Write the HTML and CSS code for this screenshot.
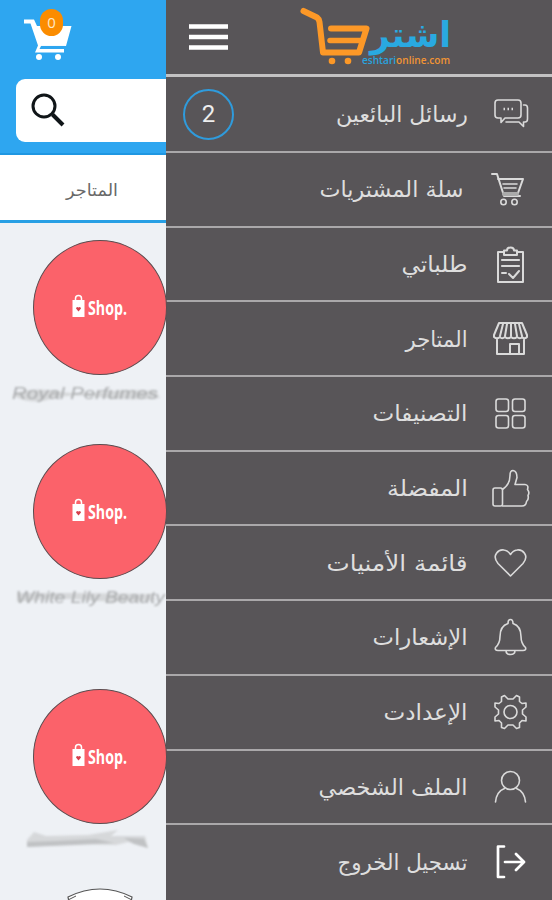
FILE: index.html
```html
<!DOCTYPE html>
<html lang="ar">
<head>
<meta charset="utf-8">
<title>اشتر</title>
<link rel="stylesheet" href="styles.css">
</head>
<body>
<div class="app">
  <main class="page">
    <header class="top">
      <svg class="basket" viewBox="0 0 54 58" width="54" height="58">
        <path d="M3 19.500h10l3 6.500h34.500L45 46H20l-1.500 3H43v3.500H14l3-7L9.500 23.500H3z" fill="#fff"/>
        <path d="M20 46.700h24" stroke="#2ea6f0" stroke-width="1.500"/>
        <circle cx="18" cy="57" r="3" fill="#fff"/><circle cx="37" cy="57" r="3" fill="#fff"/>
        <rect x="19" y="9" width="23" height="27" rx="11.500" fill="#fb8c00"/>
        <text x="30.500" y="28" class="count">0</text>
      </svg>
      <div class="search">
        <svg viewBox="0 0 36 36" width="36" height="36" fill="none" stroke="#101518">
          <circle cx="14" cy="14" r="11" stroke-width="3"/><path d="M22.500 22.500 33 33" stroke-width="4"/>
        </svg>
      </div>
    </header>
    <nav class="tab"><svg width="56" height="30"><text x="53" y="19" textLength="52" lengthAdjust="spacingAndGlyphs">المتاجر</text></svg></nav>
    <section class="stores">
      <article class="store first">
        <div class="disc"><svg class="bag" viewBox="0 0 13 24" width="13" height="24"><path d="M3.500 7V4.500a3 3 0 0 1 6 0V7" fill="none" stroke="#fff" stroke-width="1.500"/><path d="M.5 6h12v17H.5z" fill="#fff"/><path d="M6.500 17.500 4 14.500q.5-2.500 2.500-1 2-1.500 2.500 1z" fill="#d63f4c"/></svg><svg width="40" height="26"><text class="shop" x="0" y="20" textLength="39" lengthAdjust="spacingAndGlyphs">Shop.</text></svg></div>
        <svg class="name" width="160" height="22"><path d="M8 9Q28 3 50 7T95 8T150 7L154 14Q120 17 92 13T45 15T10 13z"/><text x="6" y="15" textLength="146" lengthAdjust="spacingAndGlyphs">Royal Perfumes</text></svg>
      </article>
      <article class="store second">
        <div class="disc"><svg class="bag" viewBox="0 0 13 24" width="13" height="24"><path d="M3.500 7V4.500a3 3 0 0 1 6 0V7" fill="none" stroke="#fff" stroke-width="1.500"/><path d="M.5 6h12v17H.5z" fill="#fff"/><path d="M6.500 17.500 4 14.500q.5-2.500 2.500-1 2-1.500 2.500 1z" fill="#d63f4c"/></svg><svg width="40" height="26"><text class="shop" x="0" y="20" textLength="39" lengthAdjust="spacingAndGlyphs">Shop.</text></svg></div>
        <svg class="name" width="160" height="22"><path d="M11 5H70L145 6L150 12Q110 15 80 12T11 14z"/><text x="10" y="15" textLength="149" lengthAdjust="spacingAndGlyphs">White Lily Beauty</text></svg>
      </article>
      <article class="store third">
        <div class="disc"><svg class="bag" viewBox="0 0 13 24" width="13" height="24"><path d="M3.500 7V4.500a3 3 0 0 1 6 0V7" fill="none" stroke="#fff" stroke-width="1.500"/><path d="M.5 6h12v17H.5z" fill="#fff"/><path d="M6.500 17.500 4 14.500q.5-2.500 2.500-1 2-1.500 2.500 1z" fill="#d63f4c"/></svg><svg width="40" height="26"><text class="shop" x="0" y="20" textLength="39" lengthAdjust="spacingAndGlyphs">Shop.</text></svg></div>
        <svg class="name" width="160" height="22"><path d="M21 7L28 -1L40 3L82 2L112 -3L105 3L139 3L142 15L122 9L110 12L70 11L21 14z"/><path class="dark" d="M21 9L50 8L90 6L108 10L70 12L21 14zM118 5L138 6L142 15L128 11z"/></svg>
      </article>
      <svg class="next" viewBox="0 0 70 14" width="70" height="14"><path d="M2 14L1 9Q33-7 65 9L64 14" fill="#fff" stroke="#555" stroke-width="1.200"/><path d="M1 12l8-4M57 8l8 4" stroke="#555" fill="none"/></svg>
    </section>
  </main>

  <aside class="drawer">
    <header class="brand">
      <svg class="burger" width="40" height="30" stroke="#fff" stroke-width="4.500"><path d="M1 5.500h39M1 16h39M1 26.500h39"/></svg>
      <svg class="logo" viewBox="298 0 160 74" width="160" height="74">
        <g fill="none" stroke="#fc9827" stroke-width="6" stroke-linecap="round" stroke-linejoin="round">
          <path d="M303.500 11 317 17.500Q319 19 319.500 22L323 52.500H359L366.500 28.500H331"/>
          <path d="M330 40.500H360" stroke-width="5.500"/>
        </g>
        <circle cx="332" cy="61" r="3.300" fill="#fc9827"/><circle cx="348" cy="61" r="3.300" fill="#fc9827"/>
        <text class="wordmark" x="451" y="47" textLength="81" lengthAdjust="spacingAndGlyphs">اشتر</text>
        <text class="domain" x="362" y="64" textLength="88" lengthAdjust="spacingAndGlyphs"><tspan fill="#29a3df">eshtari</tspan><tspan fill="#f19434">online.com</tspan></text>
      </svg>
    </header>

    <div class="row tall">
      <span class="badge">2</span>
      <svg class="label"><text x="168" y="32" textLength="132" lengthAdjust="spacingAndGlyphs">رسائل البائعين</text></svg>
      <svg class="icon" viewBox="0 0 48 48"><path d="M12 10H32Q35 10 35 13V25Q35 28 32 28H19L15 32.500V28H12Q9 28 9 25V13Q9 10 12 10z"/><path d="M37.500 15H39Q41.500 15 41.500 18V29Q41.500 32 39 32H37.500V36.500L33 32H20"/><path d="M17.500 19h1.500m2.500 0h1.500m2.500 0h1.500" stroke-width="2.500" stroke-linecap="butt"/></svg>
    </div>
    <div class="row">
      <svg class="label"><text x="163.500" y="32" textLength="144" lengthAdjust="spacingAndGlyphs">سلة المشتريات</text></svg>
      <svg class="icon" viewBox="0 0 48 48"><path d="M6 9H11L18 31H34M12 14H37L32 28H17" stroke-width="2"/><path d="M17 19h14M18 23h12"/><path d="M18 29H31" stroke-width="4" stroke="#aaa"/><circle cx="17.500" cy="37" r="2.700"/><circle cx="28.500" cy="37" r="2.700"/></svg>
    </div>
    <div class="row">
      <svg class="label"><text x="167.500" y="32" textLength="66" lengthAdjust="spacingAndGlyphs">طلباتي</text></svg>
      <svg class="icon" viewBox="0 0 48 48"><path d="M18 12H12V42H37V12H31" stroke-width="2"/><path d="M18 15V10.500H21Q21 7.500 24.500 7.500T28 10.500H31V15z" stroke-width="2"/><path d="M16 20H33M16 26H33" stroke-width="2.200"/><path d="M16 33h4m3 1 4 4 6-7" stroke-width="2"/></svg>
    </div>
    <div class="row">
      <svg class="label"><text x="167.500" y="32" textLength="62" lengthAdjust="spacingAndGlyphs">المتاجر</text></svg>
      <svg class="icon" viewBox="0 0 48 48"><path d="M13 8H36L41 20V22Q38.500 24.500 36 22Q34 24.500 31 22Q28 24.500 25 22Q22 24.500 19 22Q16 24.500 14 22Q11 24.500 8 22V20zM11 24V39H38V24M24 38V29H33V38" stroke-width="2"/><path d="M17 9 14 21M21 9 19 21M25 9V21M29 9 31 21M33 9 36 21" stroke-width="2"/></svg>
    </div>
    <div class="row">
      <svg class="label"><text x="167.500" y="32" textLength="95" lengthAdjust="spacingAndGlyphs">التصنيفات</text></svg>
      <svg class="icon" viewBox="0 0 48 48"><rect x="10" y="10" width="12.500" height="12.500" rx="2.500"/><rect x="26.500" y="10" width="12.500" height="12.500" rx="2.500"/><rect x="10" y="26.500" width="12.500" height="12.500" rx="2.500"/><rect x="26.500" y="26.500" width="12.500" height="12.500" rx="2.500"/></svg>
    </div>
    <div class="row">
      <svg class="label"><text x="168" y="32" textLength="81" lengthAdjust="spacingAndGlyphs">المفضلة</text></svg>
      <svg class="icon" viewBox="0 0 48 48"><rect x="7" y="24" width="9.500" height="18" rx="2"/><path d="M16.500 25.500Q24 20.500 24 11.500Q24 6.500 27 6.500Q31 7 31 13.500L29 20.500H39Q43 21 41.500 25.500Q44 28.500 42 31.500Q43 35.500 40.500 37.500Q40 42 36 42H16.500"/></svg>
    </div>
    <div class="row">
      <svg class="label"><text x="167.500" y="32" textLength="141" lengthAdjust="spacingAndGlyphs">قائمة الأمنيات</text></svg>
      <svg class="icon" viewBox="0 0 48 48"><path d="M24.500 37 12 24.500C5 16 13 10 18 11Q22 11.500 24.500 15.500Q27 11.500 31 11C36 10 44 16 37 24.500z"/></svg>
    </div>
    <div class="row">
      <svg class="label"><text x="167.500" y="32" textLength="95" lengthAdjust="spacingAndGlyphs">الإشعارات</text></svg>
      <svg class="icon" viewBox="0 0 48 48"><path d="M22 10.500Q22 6.500 24.500 6.500T27 10.500Q35 13 35 23.500Q35 30.500 39.500 34.500Q40.500 37.500 37 37.500H12Q8.500 37.500 9.500 34.500Q14 30.500 14 23.500Q14 13 22 10.500zM20 37.500Q20 41.500 24.500 41.500T29 37.500"/></svg>
    </div>
    <div class="row">
      <svg class="label"><text x="167.500" y="32" textLength="84" lengthAdjust="spacingAndGlyphs">الإعدادت</text></svg>
      <svg class="icon" viewBox="0 0 48 48"><path d="M18.500 7.500 22 11H27L30.500 7.500 33.500 9V13.500L36 15.500 40 15V19L36.500 22V26L40 29V33L36 32.500 33.500 35V39.500L30.500 40.500 27 37H22L18.500 40.500 15.500 39.500V35L13 32.500 9 33V29L12.500 26V22L9 19V15L13 15.500 15.500 13.500V9z"/><circle cx="24.500" cy="24" r="6.500"/></svg>
    </div>
    <div class="row">
      <svg class="label"><text x="167.500" y="32" textLength="149" lengthAdjust="spacingAndGlyphs">الملف الشخصي</text></svg>
      <svg class="icon" viewBox="0 0 48 48"><circle cx="24.500" cy="17.500" r="9"/><path d="M9.500 39Q10.500 28.500 18.500 25.500M30.500 25.500Q38.500 28.500 39.500 39"/></svg>
    </div>
    <div class="row last">
      <svg class="label"><text x="167.500" y="31" textLength="130" lengthAdjust="spacingAndGlyphs">تسجيل الخروج</text></svg>
      <svg class="icon exit" viewBox="0 0 48 48"><path d="M18 7.500H12V38H18M19 23H37M30 15 38 23 30 31"/></svg>
    </div>
  </aside>
</div>
</body>
</html>
```
FILE: styles.css
```css
* { box-sizing: border-box; }
body { margin: 0; font-family: "DejaVu Sans", sans-serif; }
svg { display: block; flex: none; overflow: visible; }
.app { display: flex; width: 552px; height: 900px; overflow: hidden; }

.page { width: 166px; height: 900px; background: #eef1f5; position: relative; z-index: 1; }
.top { height: 155px; background: #2ea6f0; border-bottom: 2px solid #1f97e2; padding-left: 16px; }
.basket { margin-left: 5px; }
.count { font: 15px "Open Sans", sans-serif; fill: #ffe8c5; text-anchor: middle; }
.search { margin-top: 21px; height: 63px; background: #fff; border-radius: 9px 0 0 9px; padding: 13px 0 0 14px; }
.tab { height: 68px; background: #fff; border-bottom: 3px solid #279fe4; padding: 22px 0 0 65px; }
.tab text { font-size: 17px; fill: #686868; text-anchor: end; }

.stores { padding-top: 17px; }
.store { height: 204px; }
.second { height: 245px; }
.third { height: 199px; }
.disc {
  display: flex; align-items: center; justify-content: center; gap: 3px;
  width: 134px; height: 135px; margin-left: 33px;
  border: 1px solid #5b4d50; border-radius: 50%; background: #fb626a;
}
.bag { margin-top: -3px; }
.shop { font: bold 19px "Open Sans", sans-serif; fill: #fff; }
.name { margin: 9px 0 0 6px; filter: blur(1.3px); }
.name path { fill: #d6d8da; }
.name .dark { fill: #c0c2c4; }
.name text { font: italic 16px "Liberation Sans", sans-serif; fill: #a9abad; }
.next { margin-left: 67px; }

.drawer { width: 386px; height: 900px; background: #585558; }
.brand { display: flex; height: 77px; border-bottom: 3px solid #c3c2c3; }
.burger { margin: 21px 0 0 22px; }
.logo { margin-left: 70px; }
.wordmark { font-size: 35px; font-weight: bold; fill: #29a9e1; text-anchor: end; }
.domain { font: 600 10px "Open Sans", sans-serif; }

.row {
  display: flex; align-items: center; justify-content: flex-end; gap: 16px;
  height: 74.7px; padding-right: 18px; border-bottom: 2px solid #aaa8aa;
}
.tall { height: 76px; }
.last { border-bottom: 0; }
.label { width: 170px; height: 48px; }
.label text { font-size: 22px; fill: #dedede; text-anchor: end; }
.icon {
  width: 48px; height: 48px; fill: none; stroke: #dadada; stroke-width: 1.6;
  stroke-linecap: round; stroke-linejoin: round;
}
.exit { stroke: #fff; stroke-width: 2.7; }
.badge {
  display: flex; align-items: center; justify-content: center;
  width: 51px; height: 51px; margin-right: auto; margin-left: 17px;
  border: 2px solid #2f9bdc; border-radius: 50%;
  color: #eee; font: 24px Roboto, sans-serif;
}
```
